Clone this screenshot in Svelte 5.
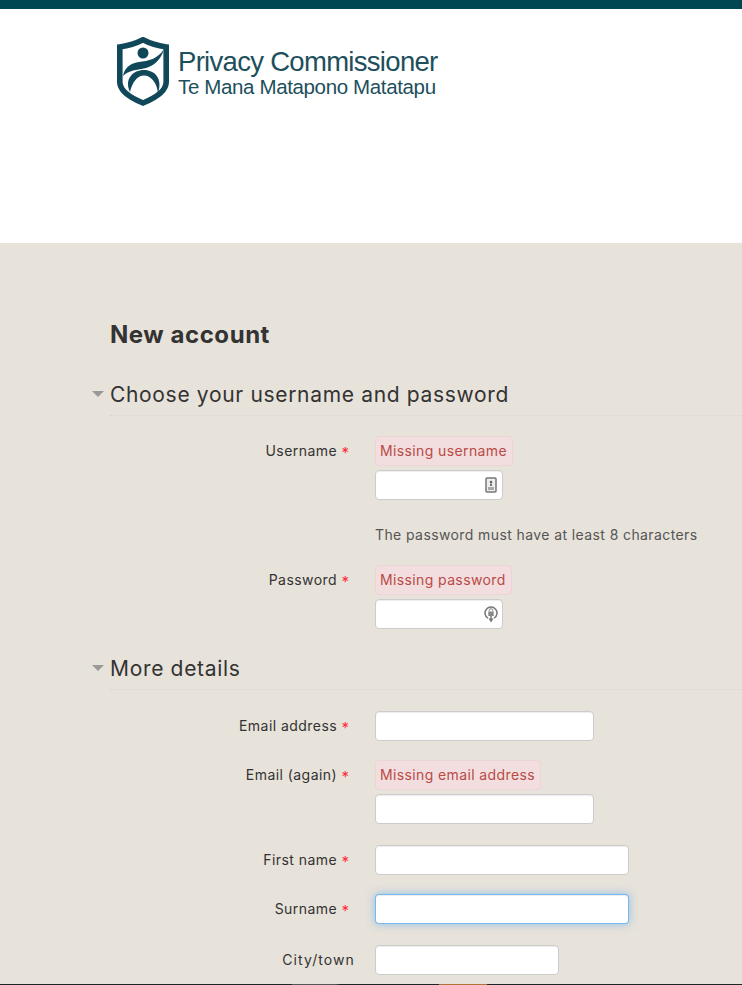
<script>
  const star = '*';
</script>

<div class="page">
  <div class="topbar"></div>
  <header class="header">
    <a class="logo" href="#home">
      <svg class="shield" viewBox="0 0 52 69" width="52" height="69" aria-hidden="true">
        <path d="M26 2.800 C19 6.500 10 9 2.800 10 L2.800 45 C2.800 54 15 61.500 26 66 C37 61.500 49.200 54 49.200 45 L49.200 10 C42 9 33 6.500 26 2.800 Z" fill="#fff" stroke="#10485a" stroke-width="5.600"/>
        <circle cx="26" cy="16" r="5.500" fill="#10485a"/>
        <path d="M47 12 C41 22 31 24 22 25 C15 26 8 29 6 39 C12 33 20 33 27 31.500 C37 29 44 23 47 12 Z" fill="#10485a"/>
        <path d="M13 55 C7 42 16 33 27 33 C38 33 46 42 41 56 C40 46 34 38.500 27 38.500 C20 38.500 15 46 13 55 Z" fill="#10485a"/>
      </svg>
      <div class="wordmark">
        <div class="wm1">Privacy Commissioner</div>
        <div class="wm2">Te Mana Matapono Matatapu</div>
      </div>
    </a>
  </header>

  <main class="main">
    <h1>New account</h1>

    <section>
      <h2><span class="tri"></span>Choose your username and password</h2>

      <div class="row r-user">
        <label for="u">Username <span class="req">{star}</span></label>
        <div class="ctl">
          <div class="err">Missing username</div>
          <div class="iconwrap w-s">
            <input id="u" class="full" type="text" />
            <svg class="ic" viewBox="0 0 12 16" width="12" height="16" aria-hidden="true">
              <rect x="1" y="1" width="10" height="14" rx="1" fill="#eee" stroke="#777" stroke-width="1.500"/>
              <circle cx="6" cy="5" r="1.300" fill="#666"/>
              <path d="M5 6.500h2v2.500H5z" fill="#777"/>
              <path d="M3 10h6v3H3z" fill="#aaa"/>
            </svg>
          </div>
        </div>
      </div>

      <div class="row note-row">
        <div></div>
        <div class="note">The password must have at least 8 characters</div>
      </div>

      <div class="row r-pass">
        <label for="p">Password <span class="req">{star}</span></label>
        <div class="ctl">
          <div class="err">Missing password</div>
          <div class="iconwrap w-s">
            <input id="p" class="full" type="password" />
            <svg class="ic pw" viewBox="0 0 14 18" width="14" height="18" aria-hidden="true">
              <path d="M4 13.200 A6 6 0 1 1 10 13.200" fill="none" stroke="#777" stroke-width="1.500"/>
              <path d="M7 11v3" stroke="#777" stroke-width="1.500"/>
              <path d="M4.500 13.500 L9.500 13.500 L7 17.500 Z" fill="#777"/>
              <path d="M5.200 6.500 V5.500 A1.800 1.800 0 0 1 8.800 5.500 V6.500" fill="none" stroke="#888" stroke-width="1"/>
              <rect x="4.300" y="6.500" width="5.400" height="4.500" fill="#888"/>
            </svg>
          </div>
        </div>
      </div>
    </section>

    <section class="more">
      <h2><span class="tri"></span>More details</h2>

      <div class="row r-mail">
        <label for="e1">Email address <span class="req">{star}</span></label>
        <div class="ctl"><input id="e1" class="w-m" type="text" /></div>
      </div>
      <div class="row r-mail2">
        <label for="e2">Email (again) <span class="req">{star}</span></label>
        <div class="ctl">
          <div class="err">Missing email address</div>
          <input id="e2" class="w-m" type="text" />
        </div>
      </div>
      <div class="row r-first">
        <label for="f">First name <span class="req">{star}</span></label>
        <div class="ctl"><input id="f" class="w-l" type="text" /></div>
      </div>
      <div class="row r-sur">
        <label for="s">Surname <span class="req">{star}</span></label>
        <div class="ctl"><input id="s" class="w-l focus" type="text" /></div>
      </div>
      <div class="row r-city">
        <label class="plain" for="c">City/town</label>
        <div class="ctl"><input id="c" class="w-c" type="text" /></div>
      </div>
    </section>
  </main>

  <footer class="footer">
    <span></span><span class="grey"></span><span class="grey2"></span><span></span><span class="orange"></span><span></span>
  </footer>
</div>

<style>
  :global(body) {
    margin: 0;
    background: #e7e2da;
  }
  .page {
    height: 985px;
    overflow: hidden;
    font-family: Inter, "Open Sans", sans-serif;
    color: #333;
  }
  .topbar {
    height: 9px;
    background: #004751;
  }
  .header {
    height: 234px;
    background: #fff;
    box-sizing: border-box;
    padding: 28px 0 0 117px;
  }
  .logo {
    display: flex;
    align-items: flex-start;
    gap: 9px;
    text-decoration: none;
    color: #1d4f5c;
    font-family: "Liberation Sans", Arial, sans-serif;
  }
  .shield {
    display: block;
    flex: none;
  }
  .wordmark {
    padding-top: 10px;
  }
  .wm1 {
    font-size: 27.500px;
    line-height: 30px;
    letter-spacing: -0.7px;
    white-space: nowrap;
  }
  .wm2 {
    font-size: 20.500px;
    line-height: 20px;
    letter-spacing: -0.36px;
    white-space: nowrap;
  }
  .main {
    height: 741px;
    box-sizing: border-box;
    background: #e7e2da;
    padding: 77px 0 0 110px;
  }
  h1 {
    margin: 0 0 30px;
    font-size: 24px;
    line-height: 30px;
    font-weight: 700;
    letter-spacing: 0.55px;
    color: #333;
  }
  h2 {
    position: relative;
    margin: 0;
    height: 35px;
    font-size: 21px;
    line-height: 30px;
    font-weight: 400;
    letter-spacing: 0.67px;
    color: #333;
    border-bottom: 1px dotted #dcd7ce;
    box-sizing: content-box;
  }
  .tri {
    position: absolute;
    left: -18px;
    top: 11px;
    border-left: 6px solid transparent;
    border-right: 6px solid transparent;
    border-top: 6px solid #999;
  }
  .row {
    display: grid;
    grid-template-columns: 245px auto;
    column-gap: 20px;
  }
  label {
    height: 30px;
    text-align: right;
    font-size: 14px;
    line-height: 30px;
    color: #333;
    letter-spacing: 0.45px;
    white-space: nowrap;
  }
  .plain {
    letter-spacing: 1.1px;
  }
  .req {
    color: #ff2a3c;
    font-size: 15px;
    line-height: 1;
    vertical-align: -2px;
    letter-spacing: 0;
    margin-right: 6px;
  }
  .ctl {
    display: flex;
    flex-direction: column;
    align-items: flex-start;
    gap: 4px;
  }
  .err {
    box-sizing: border-box;
    height: 30px;
    line-height: 28px;
    padding: 0 5px 0 4px;
    font-size: 14px;
    letter-spacing: 0.38px;
    color: #b94a48;
    background: #f2dede;
    border: 1px solid #eed3d7;
    border-radius: 4px;
    white-space: nowrap;
  }
  input {
    display: block;
    box-sizing: border-box;
    height: 30px;
    padding: 4px 6px;
    background: #fff;
    border: 1px solid #ccc;
    border-radius: 4px;
    outline: none;
    box-shadow: inset 0 1px 1px rgba(0, 0, 0, 0.075);
  }
  .full { width: 100%; }
  .w-s { width: 128px; }
  .w-m { width: 219px; }
  .w-l { width: 254px; }
  .w-c { width: 184px; }
  .focus {
    border-color: rgba(82, 168, 236, 0.8);
    box-shadow: inset 0 1px 1px rgba(0, 0, 0, 0.075), 0 0 8px rgba(82, 168, 236, 0.6);
  }
  .iconwrap {
    position: relative;
  }
  .ic {
    position: absolute;
    right: 6px;
    top: 7px;
  }
  .ic.pw {
    right: 5px;
    top: 6px;
  }
  .r-user { margin-top: 20px; }
  .note-row { margin-top: 24px; }
  .note {
    font-size: 14px;
    line-height: 22px;
    letter-spacing: 0.4px;
    color: #555;
    white-space: nowrap;
  }
  .r-pass { margin-top: 19px; }
  .more { margin-top: 25px; }
  .r-mail { margin-top: 21px; }
  .r-mail2 { margin-top: 19px; }
  .r-first { margin-top: 21px; }
  .r-sur { margin-top: 19px; }
  .r-city { margin-top: 21px; }
  .footer {
    display: grid;
    grid-template-columns: 292px 45px 3px 99px 48px 1fr;
    height: 1px;
    background: #1e2629;
  }
  .grey { background: #555; }
  .grey2 { background: #333; }
  .orange { background: #b0713a; }
</style>
